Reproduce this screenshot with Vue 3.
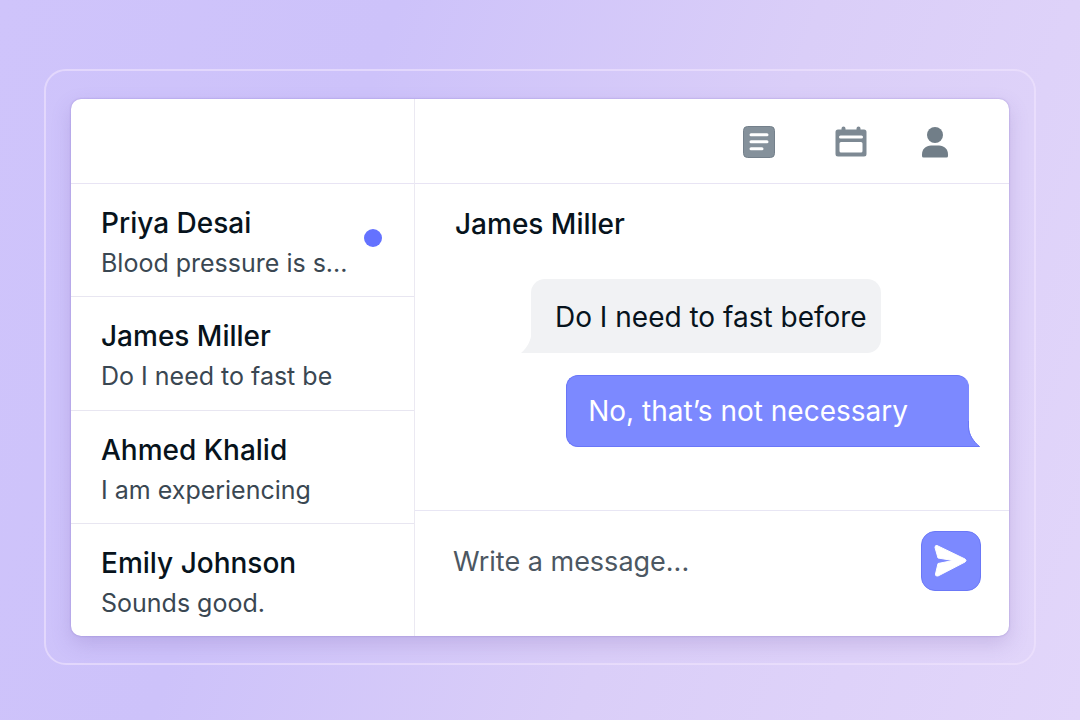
<script setup>
import { ref } from 'vue'

const draft = ref('')
const conversations = [
  { name: 'Priya Desai', preview: 'Blood pressure is s...', unread: true },
  { name: 'James Miller', preview: 'Do I need to fast be' },
  { name: 'Ahmed Khalid', preview: 'I am experiencing' },
  { name: 'Emily Johnson', preview: 'Sounds good.' },
]
</script>

<template>
  <div class="page">
    <div class="frame">
      <main class="card">
        <aside class="sidebar">
          <div class="bar"></div>
          <ul class="list">
            <li v-for="c in conversations" :key="c.name" class="item">
              <button type="button" class="row">
                <span class="texts">
                  <span class="name">{{ c.name }}</span>
                  <span class="preview">{{ c.preview }}</span>
                </span>
                <span v-if="c.unread" class="dot"></span>
              </button>
            </li>
          </ul>
        </aside>

        <section class="chat">
          <header class="bar tools">
            <button type="button" class="tool" aria-label="Notes">
              <svg width="32" height="32" viewBox="0 0 32 32">
                <rect x="0.5" y="0.5" width="31" height="31" rx="4" fill="#85919b" />
                <rect x="0.5" y="0.5" width="31" height="31" rx="4" fill="none" stroke="#74808b" />
                <path d="M8 8.7h16M8 15.8h16M8 22.8h11" stroke="#fff" stroke-width="3" stroke-linecap="round" />
              </svg>
            </button>
            <button type="button" class="tool" aria-label="Calendar">
              <svg width="32" height="32" viewBox="0 0 32 32">
                <path
                  fill="#7d8993"
                  fill-rule="evenodd"
                  d="M3 3.500h3.500v-1a2 2 0 0 1 4 0v1h11v-1a2 2 0 0 1 4 0v1H29a2.500 2.500 0 0 1 2.500 2.500v22a2.500 2.500 0 0 1-2.500 2.500H3A2.500 2.500 0 0 1 .5 28V6A2.500 2.500 0 0 1 3 3.500zM5.500 9.500a1.300 1.300 0 0 0 0 3h21a1.300 1.300 0 0 0 0-3zM6 16a1.500 1.500 0 0 0-1.500 1.500V25A1.500 1.500 0 0 0 6 26.500h20a1.500 1.500 0 0 0 1.500-1.500v-7.500A1.500 1.500 0 0 0 26 16z"
                />
              </svg>
            </button>
            <button type="button" class="tool person" aria-label="Profile">
              <svg width="28" height="32" viewBox="0 0 28 32">
                <circle cx="14" cy="9" r="8" fill="#717e88" />
                <path d="M1 28.500C1 23 5 19.500 10 19.500h8c5 0 9 3.500 9 9V30a1.500 1.500 0 0 1-1.500 1.500h-23A1.500 1.500 0 0 1 1 30z" fill="#717e88" />
              </svg>
            </button>
          </header>

          <div class="thread">
            <h1 class="name">James Miller</h1>
            <div class="bubble theirs">
              Do I need to fast before
              <svg class="tail" width="12" height="26" viewBox="0 0 12 26">
                <path d="M12 0H10.500V5C10.500 13 6 21 0 26H12z" fill="#f1f2f4" />
              </svg>
            </div>
            <div class="bubble mine">
              No, that’s not necessary
              <svg class="tail" width="13" height="26" viewBox="0 0 13 26">
                <path d="M0 0H1V6C1 14 6 21 12 26H0z" fill="#7c89ff" />
                <path d="M0.500 0V6C0.500 14 6 21 11.500 25.500H0" fill="none" stroke="#6976f8" />
              </svg>
            </div>
          </div>

          <form class="composer" @submit.prevent="draft = ''">
            <input v-model="draft" class="field" type="text" placeholder="Write a message..." aria-label="Write a message" />
            <button type="submit" class="send" aria-label="Send">
              <svg width="36" height="36" viewBox="0 0 36 36">
                <path
                  d="M4 2.500 32 16q2 1.500 0 3L5 33Q2 33.500 2.500 31L5 20.500 20 17.500 5 15 2 4.500Q2 2 4 2.500z"
                  fill="#fff"
                  stroke="#fff"
                  stroke-linejoin="round"
                />
              </svg>
            </button>
          </form>
        </section>
      </main>
    </div>
  </div>
</template>

<style>
body {
  margin: 0;
}
</style>

<style scoped>
.page {
  box-sizing: border-box;
  display: flex;
  min-height: 100vh;
  padding: 69px 44px 55px;
  background: linear-gradient(109deg, #cfc4fb 0%, #cdc2fa 30%, #dacef8 62%, #e2d6fa 100%);
  font-family: Inter, "Liberation Sans", sans-serif;
  color: #07131c;
}
.frame {
  box-sizing: border-box;
  display: flex;
  flex: 1;
  padding: 28px 25px 27px;
  border: 2px solid rgba(240, 228, 253, 0.6);
  border-radius: 22px;
}
.card {
  display: grid;
  grid-template-columns: minmax(0, 344fr) minmax(0, 594fr);
  flex: 1;
  overflow: hidden;
  border-radius: 10px;
  background: #fff;
  box-shadow: 0 0 2px rgba(112, 88, 190, 0.5), 0 8px 20px rgba(112, 88, 170, 0.22);
}
button {
  padding: 0;
  border: 0;
  background: none;
  color: inherit;
  font: inherit;
  cursor: pointer;
}
.sidebar,
.chat {
  display: flex;
  flex-direction: column;
}
.sidebar {
  border-right: 1px solid #ebe9f2;
}
.bar {
  box-sizing: border-box;
  height: 85px;
  border-bottom: 1px solid #e8e4f4;
}
.list {
  display: flex;
  flex: 1;
  flex-direction: column;
  margin: 0;
  padding: 0;
  list-style: none;
}
.item {
  display: flex;
  flex: 1;
  border-bottom: 1px solid #e8e6f1;
}
.item:last-child {
  border-bottom: 0;
}
.row {
  display: flex;
  flex: 1;
  align-items: flex-start;
  justify-content: space-between;
  padding: 21px 32px 0 30px;
  text-align: left;
}
.texts {
  display: flex;
  flex-direction: column;
  gap: 4px;
}
.name {
  margin: 0;
  font-size: 28px;
  font-weight: 500;
  line-height: 36px;
}
.preview {
  font-size: 25px;
  line-height: 36px;
  color: #3a4752;
}
.dot {
  width: 18px;
  height: 18px;
  margin-top: 24px;
  border-radius: 50%;
  background: #6472ff;
}
.tools {
  display: flex;
  align-items: center;
  justify-content: flex-end;
  gap: 60px;
  padding: 2px 60px 0 0;
}
.tool {
  display: flex;
}
.person {
  margin-left: -6px;
}
.thread {
  display: flex;
  flex: 1;
  flex-direction: column;
  padding: 22px 40px 0;
}
.bubble {
  position: relative;
  box-sizing: border-box;
  font-size: 28px;
  line-height: 36px;
  white-space: nowrap;
}
.theirs {
  align-self: flex-start;
  margin: 37px 0 22px 76px;
  padding: 20px 14px 18px 24px;
  border-radius: 14px 14px 14px 0;
  background: #f1f2f4;
}
.mine {
  align-self: flex-end;
  padding: 17px 60px 17px 21px;
  border: 1px solid #6976f8;
  border-right-color: #7c89ff;
  border-radius: 12px 12px 0 12px;
  background: #7c89ff;
  color: #fff;
}
.tail {
  position: absolute;
}
.theirs .tail {
  right: 100%;
  bottom: 0;
  margin-right: -2px;
}
.mine .tail {
  left: 100%;
  bottom: -1px;
}
.composer {
  display: flex;
  align-items: flex-start;
  gap: 24px;
  padding: 20px 28px 45px 38px;
  border-top: 1px solid #e8e6f4;
}
.field {
  flex: 1;
  min-width: 0;
  height: 60px;
  padding: 0;
  border: 0;
  outline: 0;
  background: none;
  color: #07131c;
  font: inherit;
  font-size: 27px;
}
.field::placeholder {
  color: #4c5762;
  opacity: 1;
}
.send {
  display: grid;
  place-items: center;
  width: 60px;
  height: 60px;
  border: 1px solid #6b78f7;
  border-radius: 14px;
  background: #7c89ff;
}
</style>
